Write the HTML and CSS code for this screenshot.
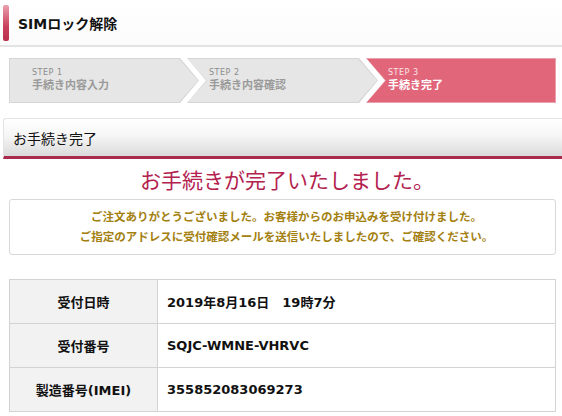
FILE: index.html
```html
<!DOCTYPE html>
<html lang="ja">
<head>
<meta charset="utf-8">
<title>SIMロック解除</title>
<link rel="stylesheet" href="styles.css">
</head>
<body>
<header class="page-head">
  <span class="head-mark"></span>
  <h1 class="head-title">SIMロック解除</h1>
</header>

<ol class="steps">
  <li class="step step-first"><div class="step-in"><span class="step-no">STEP 1</span><span class="step-name">手続き内容入力</span></div></li>
  <li class="step step-mid"><div class="step-in"><span class="step-no">STEP 2</span><span class="step-name">手続き内容確認</span></div></li>
  <li class="step step-last step-on"><div class="step-in"><span class="step-no">STEP 3</span><span class="step-name">手続き完了</span></div></li>
</ol>

<section class="section">
  <h2 class="section-head">お手続き完了</h2>
  <p class="done-title">お手続きが完了いたしました。</p>
  <div class="notice">
    <p>ご注文ありがとうございました。お客様からのお申込みを受け付けました。</p>
    <p>ご指定のアドレスに受付確認メールを送信いたしましたので、ご確認ください。</p>
  </div>

  <table class="info">
    <tr><th>受付日時</th><td>2019年8月16日　19時7分</td></tr>
    <tr><th>受付番号</th><td>SQJC-WMNE-VHRVC</td></tr>
    <tr><th>製造番号(IMEI)</th><td>355852083069273</td></tr>
  </table>
</section>
</body>
</html>
```

FILE: styles.css
```css
html, body {
  margin: 0;
  padding: 0;
  background: #fff;
}
body {
  font-family: "DejaVu Sans", "Noto Sans CJK JP", sans-serif;
  color: #222;
  width: 562px;
  overflow: hidden;
}
.page-head {
  display: flex;
  align-items: center;
  height: 45px;
  border-bottom: 2px solid #e3e3e3;
  background: linear-gradient(#ffffff, #fbfbfb);
}
.head-mark {
  width: 6px;
  height: 36px;
  margin-left: 3px;
  border-radius: 2px;
  background: linear-gradient(#eaa0ad, #c9405c 60%, #b8304f);
}
.head-title {
  margin: 0 0 0 9px;
  font-size: 14px;
  font-weight: bold;
  color: #111;
}

.steps {
  list-style: none;
  margin: 11px 0 0 9px;
  padding: 0;
  display: flex;
  height: 45px;
}
.step {
  height: 45px;
  background: #d6d6d6;
}
.step-in {
  height: 43px;
  margin: 1px;
  background: #e6e6e6;
  display: flex;
  flex-direction: column;
  justify-content: center;
}
.step-first {
  width: 190px;
  clip-path: polygon(0 0, calc(100% - 19px) 0, 100% 50%, calc(100% - 19px) 100%, 0 100%);
}
.step-first .step-in {
  clip-path: polygon(0 0, calc(100% - 19px) 0, 100% 50%, calc(100% - 19px) 100%, 0 100%);
  padding-left: 22px;
}
.step-mid {
  width: 191px;
  margin-left: -12px;
  clip-path: polygon(0 0, calc(100% - 19px) 0, 100% 50%, calc(100% - 19px) 100%, 0 100%, 19px 50%);
}
.step-mid .step-in {
  clip-path: polygon(0 0, calc(100% - 19px) 0, 100% 50%, calc(100% - 19px) 100%, 0 100%, 19px 50%);
  padding-left: 21px;
}
.step-last {
  width: 190px;
  margin-left: -12px;
  clip-path: polygon(0 0, 100% 0, 100% 100%, 0 100%, 19px 50%);
  background: #e9a0ac;
}
.step-last .step-in {
  clip-path: polygon(0 0, 100% 0, 100% 100%, 0 100%, 19px 50%);
  padding-left: 21px;
  background: #e1667a;
}
.step-no {
  font-size: 8px;
  line-height: 10px;
  color: #8c8c8c;
  letter-spacing: 0.5px;
}
.step-name {
  font-size: 11px;
  line-height: 15px;
  font-weight: bold;
  color: #9a9a9a;
}
.step-on .step-no { color: #fbe3e7; }
.step-on .step-name { color: #fff; }

.section {
  margin-top: 15px;
}
.section-head {
  margin: 0 0 0 3px;
  height: 37px;
  line-height: 40px;
  padding-left: 9px;
  font-size: 14px;
  font-weight: normal;
  color: #111;
  border-top: 1px solid #e4e4e4;
  border-left: 1px solid #e4e4e4;
  border-radius: 3px 0 0 0;
  background: linear-gradient(#ffffff 0%, #f6f6f6 45%, #dadada 100%);
  border-bottom: 3px solid #a82b4e;
}
.done-title {
  margin: 9px 0 0;
  text-align: center;
  font-size: 21px;
  line-height: 26px;
  color: #b3224e;
  padding-left: 12px;
}
.notice {
  margin: 5px 6px 0 9px;
  height: 54px;
  border: 1px solid #d8d8d8;
  border-radius: 3px;
  display: flex;
  flex-direction: column;
  justify-content: center;
  text-align: center;
  padding-left: 8px;
}
.notice p {
  margin: 0;
  font-size: 11.5px;
  line-height: 20px;
  font-weight: bold;
  color: #a38010;
}

.info {
  margin: 24px 0 0 9px;
  width: 547px;
  border-collapse: collapse;
  border: 1px solid #d3d3d3;
}
.info th, .info td {
  height: 43px;
  border: 1px solid #d3d3d3;
  font-size: 13px;
  font-weight: bold;
  color: #111;
  padding: 0;
}
.info th {
  width: 147px;
  background: #f2f2f2;
  text-align: center;
}
.info td {
  padding-left: 9px;
  text-align: left;
}
```
